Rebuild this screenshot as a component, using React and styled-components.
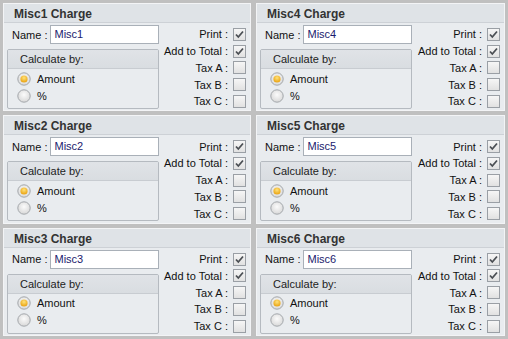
import React from 'react';
import styled, { createGlobalStyle } from 'styled-components';

const GlobalStyle = createGlobalStyle`
  html, body {
    margin: 0;
    padding: 0;
    background: #c0c0c0;
  }
  body {
    font-family: "Liberation Sans", Arial, sans-serif;
    font-size: 11px;
    color: #111;
  }
`;

const charges = [
  { name: 'Misc1' },
  { name: 'Misc4' },
  { name: 'Misc2' },
  { name: 'Misc5' },
  { name: 'Misc3' },
  { name: 'Misc6' },
];

const flags = [
  { label: 'Print', checked: true },
  { label: 'Add to Total', checked: true },
  { label: 'Tax A', checked: false },
  { label: 'Tax B', checked: false },
  { label: 'Tax C', checked: false },
];

function CheckBox({ checked }) {
  return (
    <Box>
      {checked && (
        <svg width="11" height="11" viewBox="0 0 11 11">
          <path
            d="M2 5.5 L4.3 8 L9 2.5"
            fill="none"
            stroke="#4b4f54"
            strokeWidth="1.8"
          />
        </svg>
      )}
    </Box>
  );
}

function Radio({ checked }) {
  return (
    <svg width="14" height="14" viewBox="0 0 14 14">
      <defs>
        <radialGradient id="rg" cx="50%" cy="40%" r="60%">
          <stop offset="0%" stopColor="#fbfbfb" />
          <stop offset="100%" stopColor="#d8d8d8" />
        </radialGradient>
        <radialGradient id="ry" cx="50%" cy="35%" r="60%">
          <stop offset="0%" stopColor="#ffe27a" />
          <stop offset="100%" stopColor="#eaa515" />
        </radialGradient>
      </defs>
      <circle cx="7" cy="7" r="6.2" fill="url(#rg)" stroke="#a3a7ab" />
      {checked && <circle cx="7" cy="7" r="3.6" fill="url(#ry)" />}
    </svg>
  );
}

function ChargePanel({ name }) {
  return (
    <Panel>
      <PanelTitle>{name} Charge</PanelTitle>
      <PanelBody>
        <LeftColumn>
          <NameRow>
            <span>Name :</span>
            <NameInput>{name}</NameInput>
          </NameRow>
          <GroupBox>
            <GroupHeader>Calculate by:</GroupHeader>
            <RadioList>
              <RadioRow>
                <Radio checked />
                <span>Amount</span>
              </RadioRow>
              <RadioRow>
                <Radio />
                <span>%</span>
              </RadioRow>
            </RadioList>
          </GroupBox>
        </LeftColumn>
        <FlagList>
          {flags.map((f) => (
            <FlagRow key={f.label}>
              <span>{f.label} :</span>
              <CheckBox checked={f.checked} />
            </FlagRow>
          ))}
        </FlagList>
      </PanelBody>
    </Panel>
  );
}

export default function App() {
  return (
    <>
      <GlobalStyle />
      <Grid>
        {charges.map((c) => (
          <ChargePanel key={c.name} name={c.name} />
        ))}
      </Grid>
    </>
  );
}

const Grid = styled.div`
  width: 508px;
  height: 339px;
  box-sizing: border-box;
  padding: 3px;
  display: grid;
  grid-template-columns: 248px 1fr;
  grid-template-rows: repeat(3, 1fr);
  column-gap: 5px;
  row-gap: 4px;
  background: #c0c0c0;
`;

const Panel = styled.div`
  display: flex;
  flex-direction: column;
  background: #e9ecef;
  border: 1px solid #f3f4f6;
  box-sizing: border-box;
  overflow: hidden;
`;

const PanelTitle = styled.div`
  height: 19px;
  flex: none;
  box-sizing: border-box;
  padding: 3px 0 0 10px;
  font-size: 12px;
  font-weight: bold;
  color: #333;
  background: #dfe3e7;
  border-bottom: 1px solid #cdd1d6;
`;

const PanelBody = styled.div`
  flex: 1;
  display: flex;
  justify-content: space-between;
  padding: 2px 4px 0 3px;
`;

const LeftColumn = styled.div`
  width: 152px;
  display: flex;
  flex-direction: column;
  gap: 5px;
`;

const NameRow = styled.div`
  display: flex;
  align-items: center;
  gap: 3px;
  padding-left: 5px;
`;

const NameInput = styled.div`
  flex: 1;
  height: 19px;
  box-sizing: border-box;
  background: #fff;
  border: 1px solid #a9b0b8;
  padding: 2px 3px;
  color: #1b1b6e;
  font-size: 11px;
`;

const GroupBox = styled.div`
  height: 60px;
  box-sizing: border-box;
  border: 1px solid #b5bac0;
  border-radius: 2px;
  background: #e9ecef;
  display: flex;
  flex-direction: column;
  overflow: hidden;
`;

const GroupHeader = styled.div`
  height: 19px;
  flex: none;
  box-sizing: border-box;
  padding: 3px 0 0 12px;
  font-size: 11px;
  color: #222;
  background: linear-gradient(#e0e3e7, #d9dde1);
  border-bottom: 1px solid #c8ccd1;
`;

const RadioList = styled.div`
  display: flex;
  flex-direction: column;
  padding: 1px 0 0 9px;
`;

const RadioRow = styled.div`
  height: 17px;
  display: flex;
  align-items: center;
  gap: 6px;
  font-size: 11px;
`;

const FlagList = styled.div`
  display: flex;
  flex-direction: column;
  padding-top: 1px;
`;

const FlagRow = styled.div`
  height: 16.75px;
  display: flex;
  align-items: center;
  justify-content: flex-end;
  gap: 5px;
  font-size: 11px;
  color: #111;
`;

const Box = styled.div`
  width: 13px;
  height: 13px;
  box-sizing: border-box;
  border: 1px solid #9a9fa5;
  background: linear-gradient(#f6f6f6, #e1e1e1);
  display: flex;
  align-items: center;
  justify-content: center;
`;
